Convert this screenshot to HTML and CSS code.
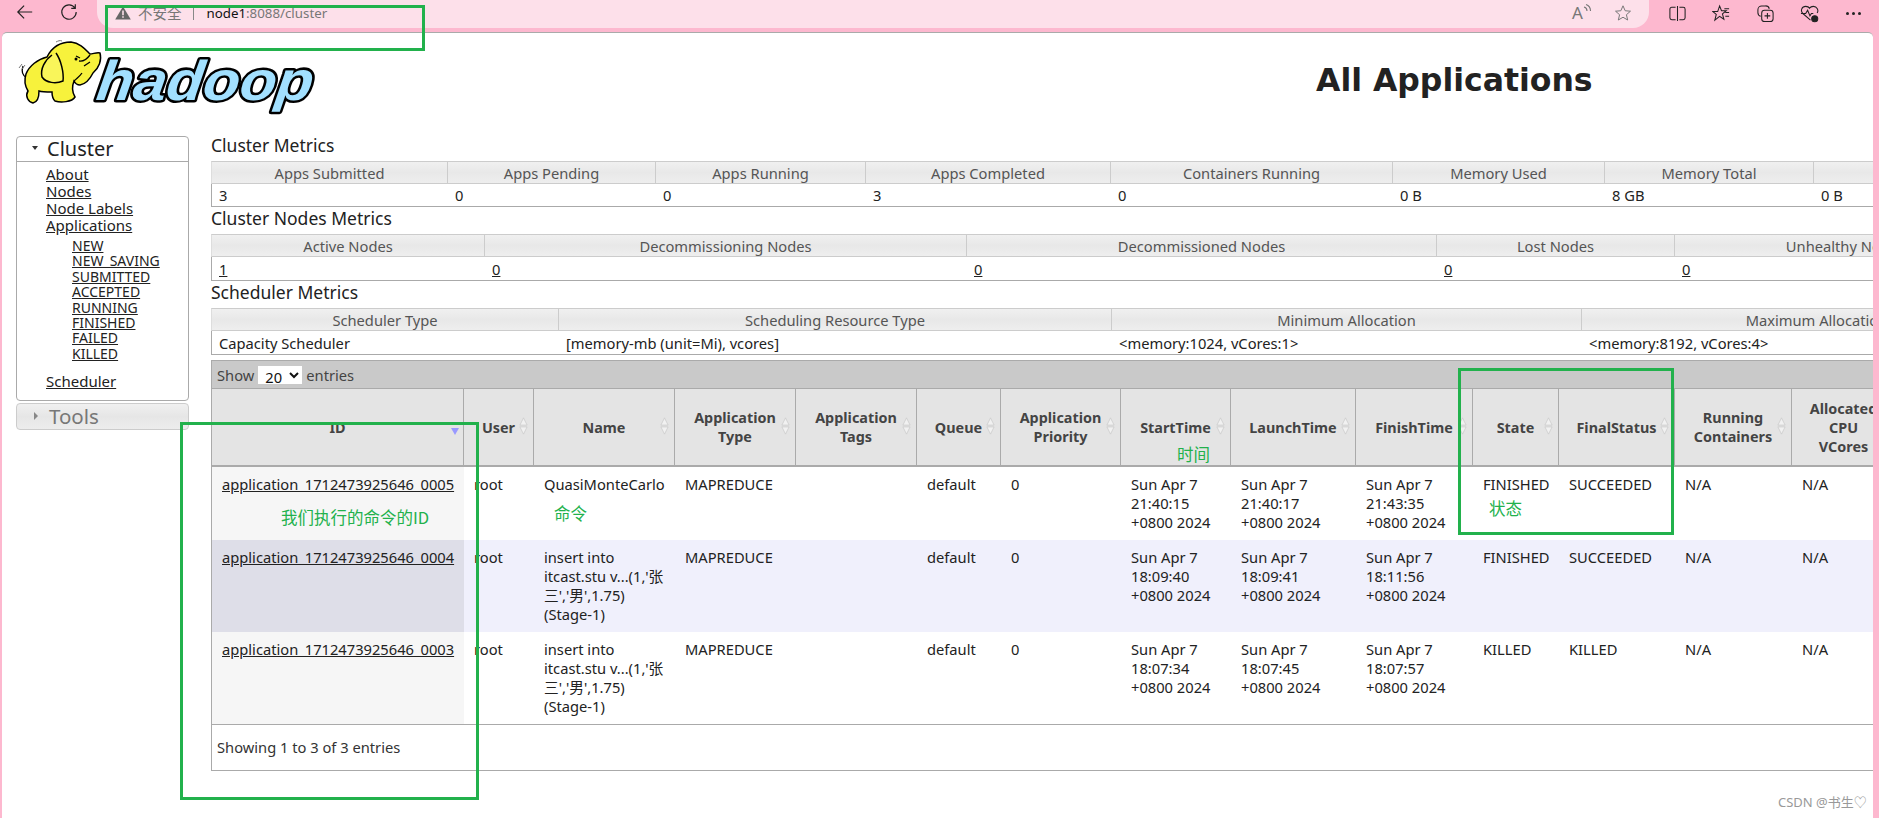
FILE: index.html
```html
<!DOCTYPE html>
<html lang="zh">
<head>
<meta charset="utf-8">
<title>All Applications</title>
<link rel="stylesheet" href="styles.css">
</head>
<body>
<div class="app">
  <div class="toolbar">
    <svg class="nav-icon back" viewBox="0 0 20 20"><path d="M2 10H18M9 3L2 10L9 17"/></svg>
    <svg class="nav-icon reload" viewBox="0 0 20 20"><path d="M16.6 5.5A8 8 0 1 0 18 10M17 1.5V6H12.5"/></svg>
    <div class="address">
      <svg class="warn" viewBox="0 0 16 14"><path class="warn-tri" d="M8 0.5L15.8 13.5H0.2Z"/><path class="warn-mark" d="M7.2 4.5H8.8V9.2H7.2ZM7.2 10.2H8.8V11.8H7.2Z"/></svg>
      <span class="insecure">不安全</span>
      <span class="sep"></span>
      <span class="url"><b>node1</b>:8088/cluster</span>
      <span class="addr-actions">
        <svg class="a-icon read" viewBox="0 0 22 20"><text x="1" y="16" class="read-a">A</text><path d="M13 4C15 4.500 16 6 16 8M15 1.500C18 2.500 19.500 5 19.500 8"/></svg>
        <svg class="a-icon star" viewBox="0 0 20 20"><path d="M10 2L12.400 7.500L18.300 8L13.800 11.900L15.200 17.800L10 14.700L4.800 17.800L6.200 11.900L1.700 8L7.600 7.500Z"/></svg>
      </span>
    </div>
    <div class="tools">
      <svg class="t-icon" viewBox="0 0 20 20"><path d="M8 3.500H4A2 2 0 0 0 2 5.500V14.500A2 2 0 0 0 4 16.500H8M12 3.500H16A2 2 0 0 1 18 5.500V14.500A2 2 0 0 1 16 16.500H12M10 2V18"/></svg>
      <svg class="t-icon" viewBox="0 0 20 20"><path d="M8 2L10 7H15L11 10.500L12.500 16L8 13L3 17L4.500 11L1 8H6ZM13 5H18M14 9H18M14 13H18"/></svg>
      <svg class="t-icon" viewBox="0 0 20 20"><path d="M5 13A4 4 0 0 1 2 9V6A4 4 0 0 1 6 2H10A4 4 0 0 1 14 5"/><rect x="6" y="6.500" width="12" height="12" rx="3"/><path d="M12 9.500V15.500M9 12.500H15"/></svg>
      <svg class="t-icon" viewBox="0 0 20 20"><path d="M11 17L3 10C0 7 2 2.500 6 2.500C8 2.500 9.500 3.500 10 4.500C11 3 12.500 2.500 14 2.500C18 2.500 20 6.500 18 9.500M1 10H6L8 6.500L10.500 12.500L12 10H14"/><circle class="solid" cx="15.500" cy="15.500" r="3.200"/></svg>
      <span class="dots"><i></i><i></i><i></i></span>
    </div>
  </div>

  <div class="page">
    <header class="banner">
      <svg class="logo" viewBox="0 0 305 75" role="img" aria-label="hadoop logo">
        <g transform="translate(-16 -38)">
          <text class="logo-word" x="0" y="0" textLength="216" lengthAdjust="spacingAndGlyphs" transform="translate(95 100) skewX(-8)">hadoop</text>
          <path class="ele-tail" d="M27 78C23 76 21 72 23 66"/>
          <path class="ele" d="M26 74C29 66 38 59 47 57C52 47 61 42 71 42C80 43 85 49 90 54C93 54 97 52 100 53C102 60 99 68 93 73C90 79 86 84 80 85C77 85 75 83 74 81C72 86 72 92 75 97C72 102 61 103 55 101C52 98 52 95 52 92C47 92 42 92 39 91C39 97 38 102 33 103C28 102 25 96 28 91C25 86 24 80 26 74Z"/>
          <path class="ele-ear" d="M52 55C45 60 40 69 42 77C46 83 56 84 63 81C64 73 61 60 56 53"/>
          <path class="ele-line" d="M79 61C84 62 87 59 90 55M84 66L90 62M76 56L80 58M74 81C77 78 80 76 82 73"/>
          <circle class="ele-eye" cx="76" cy="59" r="1.500"/>
          <path class="ele-line thin" d="M56 42C58 41 60 40 62 41M19 68L22 64M22 69L25 65"/>
        </g>
      </svg>
      <h1 class="heading">All Applications</h1>
    </header>

    <div class="body-row">
      <nav class="sidebar">
        <section class="panel">
          <h3 class="panel-head"><span class="tri-open"></span>Cluster</h3>
          <div class="panel-body">
            <a href="#">About</a>
            <a href="#">Nodes</a>
            <a href="#">Node Labels</a>
            <a href="#">Applications</a>
            <div class="sublist">
              <a href="#">NEW</a>
              <a href="#">NEW_SAVING</a>
              <a href="#">SUBMITTED</a>
              <a href="#">ACCEPTED</a>
              <a href="#">RUNNING</a>
              <a href="#">FINISHED</a>
              <a href="#">FAILED</a>
              <a href="#">KILLED</a>
            </div>
            <a href="#">Scheduler</a>
          </div>
        </section>
        <section class="panel closed">
          <h3 class="panel-head"><span class="tri-closed"></span>Tools</h3>
        </section>
      </nav>

      <main class="content">
        <div class="metric-title">Cluster Metrics</div>
        <table class="metrics m-cluster">
          <colgroup><col><col><col><col><col><col><col><col></colgroup>
          <thead><tr><th>Apps Submitted</th><th>Apps Pending</th><th>Apps Running</th><th>Apps Completed</th><th>Containers Running</th><th>Memory Used</th><th>Memory Total</th><th></th></tr></thead>
          <tbody><tr><td>3</td><td>0</td><td>0</td><td>3</td><td>0</td><td>0 B</td><td>8 GB</td><td>0 B</td></tr></tbody>
        </table>
        <div class="metric-title">Cluster Nodes Metrics</div>
        <table class="metrics tall m-nodes">
          <colgroup><col><col><col><col><col></colgroup>
          <thead><tr><th>Active Nodes</th><th>Decommissioning Nodes</th><th>Decommissioned Nodes</th><th>Lost Nodes</th><th>Unhealthy Nodes</th></tr></thead>
          <tbody><tr><td><a href="#">1</a></td><td><a href="#">0</a></td><td><a href="#">0</a></td><td><a href="#">0</a></td><td><a href="#">0</a></td></tr></tbody>
        </table>
        <div class="metric-title">Scheduler Metrics</div>
        <table class="metrics tall m-sched">
          <colgroup><col><col><col><col></colgroup>
          <thead><tr><th>Scheduler Type</th><th>Scheduling Resource Type</th><th>Minimum Allocation</th><th>Maximum Allocation</th></tr></thead>
          <tbody><tr><td>Capacity Scheduler</td><td>[memory-mb (unit=Mi), vcores]</td><td>&lt;memory:1024, vCores:1&gt;</td><td>&lt;memory:8192, vCores:4&gt;</td></tr></tbody>
        </table>

        <div class="dt">
          <div class="dt-bar">Show
            <select class="dt-select"><option>20</option></select>
            entries</div>
          <table class="apps">
            <colgroup><col><col><col><col><col><col><col><col><col><col><col><col><col><col></colgroup>
            <thead>
              <tr>
                <th>ID<span class="sort-down"></span></th>
                <th>User<svg class="sort"><use href="#sort-both"/></svg></th>
                <th>Name<svg class="sort"><use href="#sort-both"/></svg></th>
                <th>Application Type<svg class="sort"><use href="#sort-both"/></svg></th>
                <th>Application Tags<svg class="sort"><use href="#sort-both"/></svg></th>
                <th>Queue<svg class="sort"><use href="#sort-both"/></svg></th>
                <th>Application Priority<svg class="sort"><use href="#sort-both"/></svg></th>
                <th>StartTime<svg class="sort"><use href="#sort-both"/></svg></th>
                <th>LaunchTime<svg class="sort"><use href="#sort-both"/></svg></th>
                <th>FinishTime<svg class="sort"><use href="#sort-both"/></svg></th>
                <th>State<svg class="sort"><use href="#sort-both"/></svg></th>
                <th>FinalStatus<svg class="sort"><use href="#sort-both"/></svg></th>
                <th>Running Containers<svg class="sort"><use href="#sort-both"/></svg></th>
                <th>Allocated CPU VCores</th>
              </tr>
            </thead>
            <tbody>
              <tr>
                <td><a href="#">application_1712473925646_0005</a></td><td>root</td><td>QuasiMonteCarlo</td><td>MAPREDUCE</td><td></td><td>default</td><td>0</td>
                <td>Sun Apr 7 21:40:15 +0800 2024</td><td>Sun Apr 7 21:40:17 +0800 2024</td><td>Sun Apr 7 21:43:35 +0800 2024</td><td>FINISHED</td><td>SUCCEEDED</td><td>N/A</td><td>N/A</td>
              </tr>
              <tr class="even">
                <td><a href="#">application_1712473925646_0004</a></td><td>root</td><td>insert into itcast.stu v...(1,'张三','男',1.75) (Stage-1)</td><td>MAPREDUCE</td><td></td><td>default</td><td>0</td>
                <td>Sun Apr 7 18:09:40 +0800 2024</td><td>Sun Apr 7 18:09:41 +0800 2024</td><td>Sun Apr 7 18:11:56 +0800 2024</td><td>FINISHED</td><td>SUCCEEDED</td><td>N/A</td><td>N/A</td>
              </tr>
              <tr>
                <td><a href="#">application_1712473925646_0003</a></td><td>root</td><td>insert into itcast.stu v...(1,'张三','男',1.75) (Stage-1)</td><td>MAPREDUCE</td><td></td><td>default</td><td>0</td>
                <td>Sun Apr 7 18:07:34 +0800 2024</td><td>Sun Apr 7 18:07:45 +0800 2024</td><td>Sun Apr 7 18:07:57 +0800 2024</td><td>KILLED</td><td>KILLED</td><td>N/A</td><td>N/A</td>
              </tr>
            </tbody>
          </table>
          <div class="dt-foot">Showing 1 to 3 of 3 entries</div>
        </div>
      </main>
    </div>
  </div>

  <svg class="defs" aria-hidden="true">
    <symbol id="sort-both" viewBox="0 0 10 20">
      <path class="sort-shape" d="M5 1L9 9H1ZM5 19L1 11H9Z"/>
    </symbol>
  </svg>

  <div class="mark box-url"></div>
  <div class="mark box-id"></div>
  <div class="mark box-state"></div>
  <span class="note note-id">我们执行的命令的ID</span>
  <span class="note note-cmd">命令</span>
  <span class="note note-time">时间</span>
  <span class="note note-state">状态</span>
  <span class="watermark">CSDN @书生♡</span>
</div>
</body>
</html>
```

FILE: styles.css
```css
* { box-sizing: border-box; }
html, body { margin: 0; padding: 0; }
body {
  font-family: "Noto Sans", "Noto Sans CJK SC", sans-serif;
  font-size: 14.7px;
  color: #222;
}
a { color: #222; }

.app {
  position: relative;
  width: 1879px;
  height: 818px;
  overflow: hidden;
  background: #fdb8cf;
}

/* browser chrome */
.toolbar { display: flex; align-items: flex-start; height: 32px; }
.nav-icon { width: 18px; height: 18px; margin-top: 3px; fill: none; stroke: #222; stroke-width: 1.300; }
.back { margin-left: 16px; }
.reload { margin-left: 26px; }
.address {
  display: flex;
  align-items: center;
  width: 1552px;
  height: 28px;
  margin-left: 19px;
  padding: 0 0 3px 18px;
  background: #fde0ea;
  border-radius: 0 0 16px 16px;
}
.warn { width: 16px; height: 14px; }
.warn-tri { fill: #666; }
.warn-mark { fill: #fde0ea; }
.insecure { margin-left: 7px; color: #777; font-size: 14.500px; }
.sep { width: 1px; height: 14px; margin: 0 13px 0 11px; background: #888; }
.url { color: #777; font-size: 13.300px; }
.url b { color: #111; font-weight: 400; }
.addr-actions { display: flex; align-items: center; gap: 20px; margin-left: auto; margin-right: 16px; }
.a-icon { width: 20px; height: 18px; fill: none; stroke: #777; stroke-width: 1.100; overflow: visible; }
.read { width: 22px; height: 20px; }
.read-a { font-family: "Noto Sans", sans-serif; font-size: 17px; fill: #777; stroke: none; }
.tools { display: flex; align-items: center; gap: 25px; height: 26px; margin-left: 19px; }
.t-icon { width: 19px; height: 19px; fill: none; stroke: #222; stroke-width: 1.100; }
.solid { fill: #222; }
.dots { display: flex; gap: 3px; margin-left: 2px; }
.dots i { width: 3px; height: 3px; border-radius: 50%; background: #222; }

/* page */
.page {
  width: 1871px;
  height: 786px;
  margin-left: 2px;
  background: #fff;
  border-top: 1px solid #aaa;
  border-radius: 5px 5px 0 0;
  overflow: hidden;
}
.banner { display: flex; height: 100px; }
.logo { width: 305px; height: 75px; margin: 5px 0 0 14px; flex: none; overflow: visible; }
.logo-word {
  font-family: "Liberation Sans", sans-serif;
  font-weight: 700;
  font-style: italic;
  font-size: 56px;
  fill: #a2e0ff;
  stroke: #000;
  stroke-width: 5;
  stroke-linejoin: round;
  paint-order: stroke;
}
.ele { fill: #f7f23c; stroke: #000; stroke-width: 1.500; }
.ele-ear { fill: #f9f55a; stroke: #000; stroke-width: 1.500; }
.ele-tail, .ele-line { fill: none; stroke: #000; stroke-width: 1.300; }
.ele-line.thin { stroke: #777; stroke-width: 1; }
.ele-eye { fill: #000; }
.heading {
  margin: 27px 0 0 995px;
  font-family: "DejaVu Sans", sans-serif;
  font-size: 31.500px;
  line-height: 40px;
  font-weight: 700;
  color: #222;
  white-space: nowrap;
}

.body-row { display: flex; }

/* sidebar */
.sidebar { flex: none; width: 173px; margin: 3px 0 0 14px; }
.panel { border: 1px solid #aaa; border-radius: 4px; margin-bottom: 2px; }
.panel-head {
  display: flex;
  align-items: center;
  height: 25px;
  margin: 0;
  padding: 0 0 2px 15px;
  border-bottom: 1px solid #aaa;
  font-size: 20px;
  font-weight: 400;
  color: #222;
}
.tri-open { width: 0; height: 0; margin-right: 9px; border: 3.500px solid transparent; border-top: 4px solid #333; border-bottom: 0; }
.tri-closed { width: 0; height: 0; margin: 0 11px 0 3px; border: 4px solid transparent; border-left: 4px solid #888; border-right: 0; }
.panel-body { display: flex; flex-direction: column; align-items: flex-start; padding: 4px 0 9px 29px; line-height: 17px; font-size: 15px; height: 238px; }
.sublist { display: flex; flex-direction: column; align-items: flex-start; margin: 4px 0 12px 26px; font-size: 14px; line-height: 15.400px; }
.closed { background: linear-gradient(#f0f0f0, #e6e6e6 50%, #ededed); border-color: #ccc; }
.closed .panel-head { border-bottom: 0; color: #777; font-size: 20.500px; padding-left: 14px; }

/* main */
.content { flex: none; width: 1662px; margin: 1px 0 0 22px; overflow: hidden; }
.metric-title { height: 27px; font-size: 17.500px; line-height: 22px; color: #222; }
.metrics { table-layout: fixed; border-collapse: separate; border-spacing: 0; }
.metrics th {
  height: 23px;
  padding: 1px 0 0;
  font-weight: 400;
  color: #555;
  background: linear-gradient(#f0f0f0, #e8e8e8 50%, #eeeeee);
  border-top: 1px solid #ccc;
  border-right: 1px solid #ccc;
  border-bottom: 1px solid #ccc;
  white-space: nowrap;
}
.metrics th:first-child { border-left: 1px solid #ddd; }
.metrics td {
  height: 23px;
  padding: 0 0 0 7px;
  border-bottom: 1px solid #aaa;
  white-space: nowrap;
}
.metrics td:first-child { border-left: 1px solid #aaa; }
.metrics.tall td { height: 24px; }

.m-cluster { width: 1903px; }
.m-cluster col:nth-child(1) { width: 237px; }
.m-cluster col:nth-child(2) { width: 208px; }
.m-cluster col:nth-child(3) { width: 210px; }
.m-cluster col:nth-child(4) { width: 245px; }
.m-cluster col:nth-child(5) { width: 282px; }
.m-cluster col:nth-child(6) { width: 212px; }
.m-cluster col:nth-child(7) { width: 209px; }
.m-cluster col:nth-child(8) { width: 300px; }

.m-nodes { width: 1806px; }
.m-nodes col:nth-child(1) { width: 274px; }
.m-nodes col:nth-child(2) { width: 482px; }
.m-nodes col:nth-child(3) { width: 470px; }
.m-nodes col:nth-child(4) { width: 238px; }
.m-nodes col:nth-child(5) { width: 342px; }

.m-sched { width: 1841px; }
.m-sched col:nth-child(1) { width: 348px; }
.m-sched col:nth-child(2) { width: 553px; }
.m-sched col:nth-child(3) { width: 470px; }
.m-sched col:nth-child(4) { width: 470px; }

/* data table */
.dt { margin-top: 5px; border-left: 1px solid #aaa; border-bottom: 1px solid #aaa; width: 1700px; }
.dt-bar {
  display: flex;
  align-items: center;
  gap: 4px;
  height: 28px;
  padding-left: 5px;
  background: #c9c9c9;
  border-top: 1px solid #aaa;
  color: #444;
}
.dt-select {
  width: 44px;
  height: 18px;
  padding: 0 0 0 3px;
  border: 0;
  background: #fff;
  font: inherit;
  color: #111;
}
.apps { table-layout: fixed; width: 1684px; border-collapse: separate; border-spacing: 0; }
.apps col:nth-child(1) { width: 252px; }
.apps col:nth-child(2) { width: 70px; }
.apps col:nth-child(3) { width: 141px; }
.apps col:nth-child(4) { width: 121px; }
.apps col:nth-child(5) { width: 121px; }
.apps col:nth-child(6) { width: 84px; }
.apps col:nth-child(7) { width: 120px; }
.apps col:nth-child(8) { width: 110px; }
.apps col:nth-child(9) { width: 125px; }
.apps col:nth-child(10) { width: 117px; }
.apps col:nth-child(11) { width: 86px; }
.apps col:nth-child(12) { width: 116px; }
.apps col:nth-child(13) { width: 117px; }
.apps col:nth-child(14) { width: 104px; }
.apps th {
  position: relative;
  height: 79px;
  padding: 0 14px;
  background: #e4e4e4;
  border-top: 1px solid #aaa;
  border-right: 1px solid #aaa;
  border-bottom: 2px solid #aaa;
  color: #444;
  font-size: 14.400px;
  font-weight: 700;
  line-height: 19px;
  text-align: center;
}
.sort { position: absolute; right: 5px; top: 28px; width: 9px; height: 18px; }
.sort-shape { fill: #f1f1f1; stroke: #c8c8c8; stroke-width: 0.800; }
.sort-down { position: absolute; right: 4px; top: 39px; width: 0; height: 0; border: 4px solid transparent; border-top: 7px solid #9999ff; border-bottom: 0; }
.apps td { padding: 8px 10px; vertical-align: top; line-height: 19px; border-right: 1px solid transparent; }
.apps td:first-child { background: #f6f6f6; white-space: nowrap; }
.apps .even td { background: #f0f0fc; }
.apps .even td:first-child { background: #dedee8; }
.dt-foot { display: flex; align-items: center; height: 46px; padding: 0 0 1px 5px; border-top: 1px solid #aaa; color: #333; }

/* annotations laid over the screenshot */
.defs { position: absolute; width: 0; height: 0; }
.mark { position: absolute; border: 3px solid #22b14c; }
.box-url { left: 105px; top: 5px; width: 320px; height: 46px; }
.box-id { left: 180px; top: 422px; width: 299px; height: 378px; }
.box-state { left: 1458px; top: 368px; width: 216px; height: 167px; }
.note { position: absolute; color: #22b14c; font-size: 16.500px; line-height: 20px; font-family: "Noto Sans CJK SC", sans-serif; white-space: nowrap; }
.note-id { left: 281px; top: 507px; }
.note-cmd { left: 554px; top: 503px; }
.note-time { left: 1177px; top: 444px; }
.note-state { left: 1489px; top: 498px; }
.watermark { position: absolute; left: 1778px; top: 793px; color: #999; font-size: 13px; line-height: 18px; white-space: nowrap; }
```
